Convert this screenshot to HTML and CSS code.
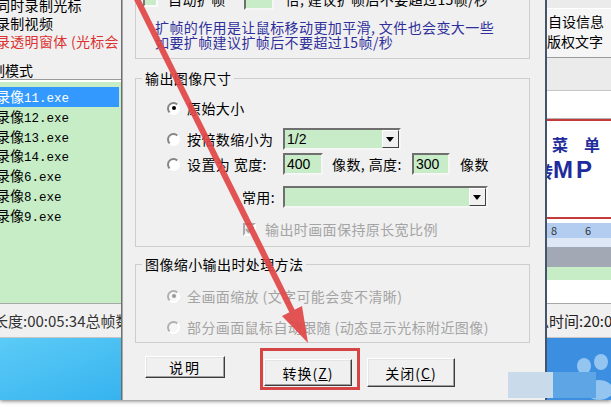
FILE: index.html
```html
<!DOCTYPE html>
<html lang="zh-CN">
<head>
  <meta charset="utf-8">
  <title>转换</title>
  <link rel="stylesheet" href="styles.css">
</head>
<body>
<div class="screen">

  <!-- 左边: 录像列表 -->
  <div class="app-left">
    <div class="opts">
      <div class="opt">同时录制光标</div>
      <div class="opt">录制视频</div>
      <div class="opt red">录透明窗体 (光标会</div>
    </div>
    <div class="mode">制模式</div>
    <div class="sep"></div>
    <ul class="files">
      <li class="sel">录像<span class="ext">11.exe</span></li>
      <li>录像<span class="ext">12.exe</span></li>
      <li>录像<span class="ext">13.exe</span></li>
      <li>录像<span class="ext">14.exe</span></li>
      <li>录像<span class="ext">6.exe</span></li>
      <li>录像<span class="ext">8.exe</span></li>
      <li>录像<span class="ext">9.exe</span></li>
    </ul>
    <div class="status">长度:00:05:34总帧数</div>
    <div class="desk"></div>
  </div>

  <!-- 中间: 对话框 -->
  <div class="dialog">
    <fieldset class="grp grp-frames">
      <div class="frames-row">
        <span class="box box-green"></span>
        <span class="frames-lbl">自动扩帧</span>
        <span class="field field-tiny"></span>
        <span class="frames-tip">倍, 建议扩帧后不要超过15帧/秒</span>
      </div>
      <p class="desc">扩帧的作用是让鼠标移动更加平滑, 文件也会变大一些<br>如要扩帧建议扩帧后不要超过15帧/秒</p>
    </fieldset>

    <fieldset class="grp grp-size">
      <legend>输出图像尺寸</legend>
      <div class="row r1"><span class="radio on"></span><span class="lbl">原始大小</span></div>
      <div class="row r2">
        <span class="radio"></span><span class="lbl">按倍数缩小为</span>
        <span class="field combo w-scale">1/2<i class="drop"></i></span>
      </div>
      <div class="row r3">
        <span class="radio"></span><span class="lbl">设置为 宽度:</span>
        <span class="field w-num">400</span>
        <span class="mid">像数, 高度:</span>
        <span class="field w-num2">300</span>
        <span class="unit">像数</span>
      </div>
      <div class="row r4">
        <span class="lbl-r">常用:</span>
        <span class="field combo w-common"><i class="drop"></i></span>
      </div>
      <div class="row r5">
        <span class="box box-dis"><svg width="9" height="9" viewBox="0 0 9 9"><polyline points="1,4 3.5,7 8,1.5" fill="none" stroke="#a4a4a4" stroke-width="2"/></svg></span>
        <span class="dis keep">输出时画面保持原长宽比例</span>
      </div>
    </fieldset>

    <fieldset class="grp grp-mode">
      <legend>图像缩小输出时处理方法</legend>
      <div class="row m1"><span class="radio on dis-r"></span><span class="lbl dis">全画面缩放 (文字可能会变不清晰)</span></div>
      <div class="row m2"><span class="radio dis-r"></span><span class="lbl dis">部分画面鼠标自动跟随 (动态显示光标附近图像)</span></div>
    </fieldset>

    <div class="buttons">
      <span class="btn btn-help">说明</span>
      <div class="mark-box">
        <span class="btn btn-go">转换(<u>Z</u>)</span>
      </div>
      <span class="btn btn-close">关闭(<u>C</u>)</span>
    </div>
  </div>

  <!-- 右边: 主窗口露出的部分 -->
  <div class="app-right">
    <div class="r-top"></div>
    <div class="r-info">自设信息<br>版权文字</div>
    <div class="r-gray"></div>
    <div class="r-field"></div>
    <div class="r-banner">
      <div class="b1">菜　单</div>
      <div class="b2">转<span class="mp">MP</span></div>
    </div>
    <div class="r-gap"></div>
    <div class="r-nums"><span>8</span><span class="n2">6</span></div>
    <div class="r-pale"></div>
    <div class="r-bar"></div>
    <div class="r-green"></div>
    <div class="r-blank"></div>
    <div class="r-status">总时间:20:00</div>
    <div class="r-desk">
      <svg width="64" height="62" viewBox="0 0 64 62">
        <ellipse cx="37" cy="28" rx="7" ry="8" fill="#94c4f0"/>
        <ellipse cx="54" cy="24" rx="7" ry="8" fill="#94c4f0"/>
        <ellipse cx="52" cy="52" rx="14" ry="10" fill="#94c4f0"/>
      </svg>
    </div>
  </div>

  <!-- 红色箭头 -->
  <svg class="arrow" width="611" height="400" viewBox="0 0 611 400">
    <line x1="135" y1="-5" x2="293" y2="313" stroke="#e14646" stroke-width="6"/>
    <polygon points="308,343 302,306 282,316" fill="#e14646"/>
  </svg>

  <div class="wm"><span class="wm-a"></span><span class="wm-b"></span></div>
</div>
</body>
</html>
```

FILE: styles.css
```css
* { box-sizing: border-box; }
html, body { margin: 0; padding: 0; }
body {
    width: 611px;
    height: 411px;
    overflow: hidden;
    background: #fff;
    font-family: "Noto Sans CJK SC", "Liberation Sans", sans-serif;
    font-size: 14px;
    color: #000;
}
.screen {
    position: relative;
    display: flex;
    width: 611px;
    height: 400px;
    box-shadow: 0 1px 4px rgba(0,0,0,.55);
}

/* left app */
.app-left {
    width: 122px;
    display: flex;
    flex-direction: column;
    background: #f0f0f0;
    border-right: 1px solid #6e6e6e;
    overflow: hidden;
    white-space: nowrap;
}
.opts { margin-top: -4px; height: 54px; line-height: 18px; text-indent: -4px; letter-spacing: .3px; }
.opt.red { color: #dc3232; }
.mode { margin-top: 11px; height: 18px; line-height: 18px; text-indent: -9px; }
.sep { height: 3px; border-top: 1px solid #9a9a9a; background: #fff; }
.files {
    list-style: none;
    margin: 0;
    padding: 5px 0 0;
    height: 221px;
    background: #c7edc7;
}
.files li { height: 19.8px; line-height: 19.8px; text-indent: -4px; margin-right: 2px; }
.files li.sel { background: #3399ff; color: #fff; }
.ext { font-family: "Liberation Mono", monospace; font-size: 12.5px; }
.status {
    height: 35px;
    line-height: 33px;
    border-top: 1px solid #a8a8a8;
    border-bottom: 1px solid #c4c4c4;
    text-indent: -7px;
    font-size: 15px;
    color: #333;
}
.desk { flex: 1; background: linear-gradient(160deg, #5ccbf6, #36b3ef); }

/* dialog */
.dialog {
    width: 425px;
    background: #f0f0f0;
    border-left: 1px solid #a9a9a9;
    border-right: 2px solid #44556a;
    padding-left: 12px;
    overflow: hidden;
    white-space: nowrap;
    letter-spacing: .4px;
}
.grp {
    display: block;
    width: 395px;
    min-width: 0;
    margin: 0;
    padding: 0;
    border: 1px solid #cdcdcd;
}
.grp legend { margin-left: 6px; padding: 0 3px; height: 18px; line-height: 18px; }

.grp-frames { margin-top: -17px; padding: 5px 0 8px 7px; }
.frames-row { display: flex; align-items: center; height: 20px; }
.frames-lbl { margin-left: 10px; }
.field-tiny { width: 30px; height: 20px; margin-left: 18px; }
.frames-tip { margin-left: 12px; }
.desc { margin: 11px 0 0 12px; line-height: 15px; color: #2f2f9c; }

.grp-size { margin-top: 10px; padding-bottom: 6px; }
.grp-mode { margin-top: 8px; padding-bottom: 4px; }
.row { display: flex; align-items: center; height: 22px; padding-left: 31px; }
.r1 { margin-top: 10px; }
.r2 { margin-top: 9px; }
.r3 { margin-top: 3px; }
.r4 { margin-top: 11px; }
.r5 { margin-top: 10px; }
.m1 { margin-top: 12px; }
.m2 { margin-top: 9px; }

.lbl { width: 96px; margin-left: 7px; }
.lbl.dis { width: auto; }
.lbl-r { width: 108px; text-align: right; }
.dis { color: #a4a4a4; }
.keep { margin-left: 9px; }
.mid { width: 80px; margin-left: 9px; }
.unit { margin-left: 10px; }

/* controls */
.radio {
    position: relative;
    flex: none;
    width: 13px;
    height: 13px;
    border-radius: 50%;
    border: 2px solid;
    border-color: #858585 #fff #fff #858585;
    background: #fff;
}
.radio.on::after {
    content: "";
    position: absolute;
    left: 2.5px;
    top: 2.5px;
    width: 4px;
    height: 4px;
    border-radius: 50%;
    background: #000;
}
.radio.dis-r { border-color: #b0b0b0 #fff #fff #b0b0b0; background: #f6f6f6; }
.radio.dis-r::after { background: #9a9a9a; }

.box {
    flex: none;
    display: flex;
    align-items: center;
    justify-content: center;
    border: 2px solid;
    border-color: #7a7a7a #fafafa #fafafa #7a7a7a;
}
.box-green { width: 15px; height: 15px; background: #c8ecc8; }
.box-dis { width: 13px; height: 13px; margin-left: 76px; background: #f0f0f0; border-color: #aaaaaa #fff #fff #aaaaaa; }

.field {
    flex: none;
    display: flex;
    align-items: center;
    height: 22px;
    padding-left: 2px;
    border: 2px solid;
    border-color: #6f6f6f #f6f6f6 #f6f6f6 #6f6f6f;
    background: #c8ecc8;
    font-family: "Liberation Sans", sans-serif;
    font-size: 14px;
    letter-spacing: 0;
}
.w-scale { width: 118px; }
.w-num { width: 40px; }
.w-num2 { width: 38px; }
.w-common { width: 205px; margin-left: 8px; }
.drop {
    position: relative;
    margin-left: auto;
    width: 17px;
    height: 18px;
    background: #f0f0f0;
    border: 1px solid;
    border-color: #fff #404040 #404040 #fff;
}
.drop::after {
    content: "";
    position: absolute;
    left: 3px;
    top: 6px;
    border-top: 5px solid #000;
    border-left: 4.5px solid transparent;
    border-right: 4.5px solid transparent;
}

/* buttons */
.buttons { display: flex; align-items: flex-start; margin-top: 14px; padding-left: 10px; }
.btn {
    display: flex;
    align-items: center;
    justify-content: center;
    background: #f0f0f0;
    border: 1px solid;
    border-color: #fff #3c3c3c #3c3c3c #fff;
    box-shadow: inset -1px -1px 0 #a0a0a0, inset 1px 1px 0 #e4e4e4;
    letter-spacing: 1px;
}
.btn-help { width: 80px; height: 22px; margin-top: -1px; letter-spacing: 2px; }
.mark-box {
    width: 100px;
    height: 42px;
    margin: -9px 0 0 35px;
    padding: 8px 5px 0 1px;
    border: 3px solid #d64545;
}
.btn-go { width: 88px; height: 27px; }
.btn-close { width: 88px; height: 29px; margin: 1px 0 0 7px; }

/* right app */
.app-right {
    width: 64px;
    display: flex;
    flex-direction: column;
    background: #fff;
    overflow: hidden;
    white-space: nowrap;
}
.r-top { height: 9px; background: #ebebeb; border-bottom: 1px solid #fff; }
.r-info { height: 49px; padding-top: 2px; line-height: 20px; background: #f5f5f5; border-bottom: 1px solid #9c9c9c; text-indent: 1px; }
.r-gray { height: 33px; background: #ebebeb; border-bottom: 1px solid #c6c6c6; }
.r-field { height: 28px; background: #fff; border-bottom: 1px solid #b4b4b4; }
.r-banner {
    height: 100px;
    padding-top: 11px;
    border-top: 2px solid #c43b3b;
    border-bottom: 2px solid #c43b3b;
    color: #1f2c9c;
    font-weight: bold;
    font-size: 16px;
    line-height: 25px;
}
.b1 { text-indent: 5px; }
.b2 { text-indent: -10px; }
.mp { font-family: "Liberation Sans", sans-serif; font-size: 24px; letter-spacing: 3px; }
.r-gap { height: 4px; }
.r-nums { height: 15px; line-height: 15px; padding-left: 4px; background: #b3cdf1; font-size: 11px; color: #333; }
.r-nums .n2 { margin-left: 28px; }
.r-pale { height: 9px; background: #dde7f5; }
.r-bar { height: 20px; background: #a2a8b4; }
.r-green { height: 13px; background: #c6edc6; }
.r-blank { height: 23px; background: #fff; }
.r-status {
    height: 35px;
    line-height: 33px;
    background: #f0f0f0;
    border-top: 1px solid #a8a8a8;
    border-bottom: 1px solid #c4c4c4;
    text-indent: -13px;
    font-size: 15px;
    color: #222;
}
.r-desk { flex: 1; background: #3b8ee0; }
.r-desk svg { display: block; }

/* overlays */
.arrow { position: absolute; left: 0; top: 0; pointer-events: none; opacity: .92; }
.wm { position: absolute; left: 508px; top: 372px; display: flex; height: 26px; }
.wm-a { width: 45px; background: #c9dbea; }
.wm-b { width: 43px; background: #5ea5e5; }
```
